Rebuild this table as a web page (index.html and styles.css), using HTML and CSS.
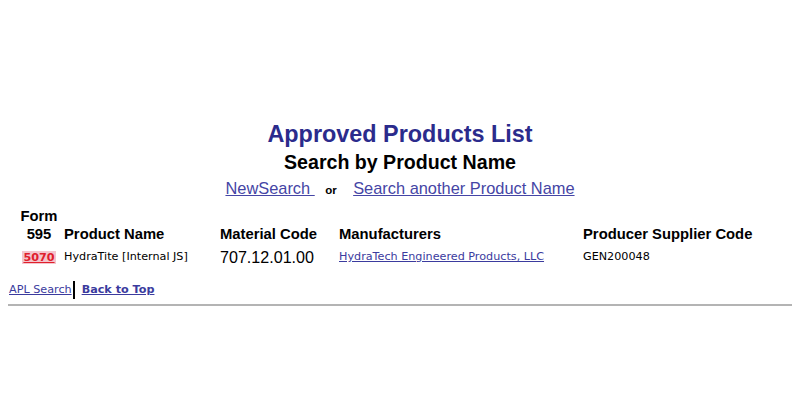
FILE: index.html
```html
<!DOCTYPE html>
<html>
<head>
<meta charset="utf-8">
<link rel="stylesheet" href="styles.css">
</head>
<body>
<div class="head">
  <h1 class="title">Approved Products List</h1>
  <h2 class="subtitle">Search by Product Name</h2>
  <div class="links">
    <a href="#" class="big-link">NewSearch </a>
    <span class="or">or</span>
    <a href="#" class="big-link">Search another Product Name</a>
  </div>
</div>
<table class="results">
  <thead>
    <tr>
      <th class="c1">Form<br>595</th>
      <th class="c2">Product Name</th>
      <th class="c3">Material Code</th>
      <th class="c4">Manufacturers</th>
      <th class="c5">Producer Supplier Code</th>
    </tr>
  </thead>
  <tbody>
    <tr>
      <td class="c1"><span class="form-no">5070</span></td>
      <td class="c2 small">HydraTite [Internal JS]</td>
      <td class="c3 code">707.12.01.00</td>
      <td class="c4 small"><a href="#" class="small-link">HydraTech Engineered Products, LLC</a></td>
      <td class="c5 small">GEN200048</td>
    </tr>
  </tbody>
</table>
<div class="foot">
  <a href="#" class="small-link">APL Search</a><span class="sep"></span><a href="#" class="small-link bold">Back to Top</a>
</div>
<hr class="rule">
</body>
</html>
```
FILE: styles.css
```css
body {
  margin: 8px;
  background: #ffffff;
  font-family: "Liberation Sans", Arial, sans-serif;
  color: #000;
}
.head {
  padding-top: 112px;
  text-align: center;
}
.title {
  margin: 0;
  font-size: 23.4px;
  line-height: 28px;
  font-weight: bold;
  color: #2b2b8c;
}
.subtitle {
  margin: 2px 0 0;
  font-size: 19.6px;
  line-height: 24px;
  font-weight: bold;
  color: #000;
}
.links {
  margin-top: 3px;
  line-height: 22px;
}
.big-link {
  font-size: 16.4px;
  color: #4545a5;
  text-decoration: underline;
  white-space: pre;
}
.or {
  font-size: 11.5px;
  font-weight: bold;
  margin: 0 12px 0 6px;
}
.results {
  border-collapse: collapse;
  margin: 6px 0 0 12px;
}
.results th {
  font-size: 14.8px;
  line-height: 18px;
  font-weight: bold;
  text-align: left;
  vertical-align: bottom;
  padding: 0;
}
.results td {
  padding: 4px 0 0;
  line-height: 18px;
  vertical-align: middle;
}
.results th.c1 { text-align: center; }
.results td.c1 { text-align: center; }
.c1 { width: 38px; padding-right: 6px !important; }
.c2 { width: 156px; }
.c3 { width: 119px; }
.c4 { width: 244px; }
.c5 { width: 200px; }
.small {
  font-family: "DejaVu Sans", Verdana, sans-serif;
  font-size: 11.2px;
}
.code {
  font-size: 16.1px;
}
.form-no {
  font-family: "DejaVu Sans", Verdana, sans-serif;
  font-size: 11.2px;
  font-weight: bold;
  color: #e0202c;
  background: #f3c5cd;
  text-decoration: underline;
  padding: 0 1px;
}
.small-link {
  font-family: "DejaVu Sans", Verdana, sans-serif;
  font-size: 11.2px;
  color: #3b3b9e;
  text-decoration: underline;
}
.bold { font-weight: bold; }
.foot {
  margin-top: 14px;
  padding-left: 1px;
  display: flex;
  align-items: center;
  line-height: 18px;
}
.sep {
  display: inline-block;
  width: 2px;
  height: 18px;
  background: #000;
  margin: 0 7px 0 1px;
}
.rule {
  margin: 5px 0 0;
  border: 0;
  border-top: 2px solid #b4b4b4;
}
```
